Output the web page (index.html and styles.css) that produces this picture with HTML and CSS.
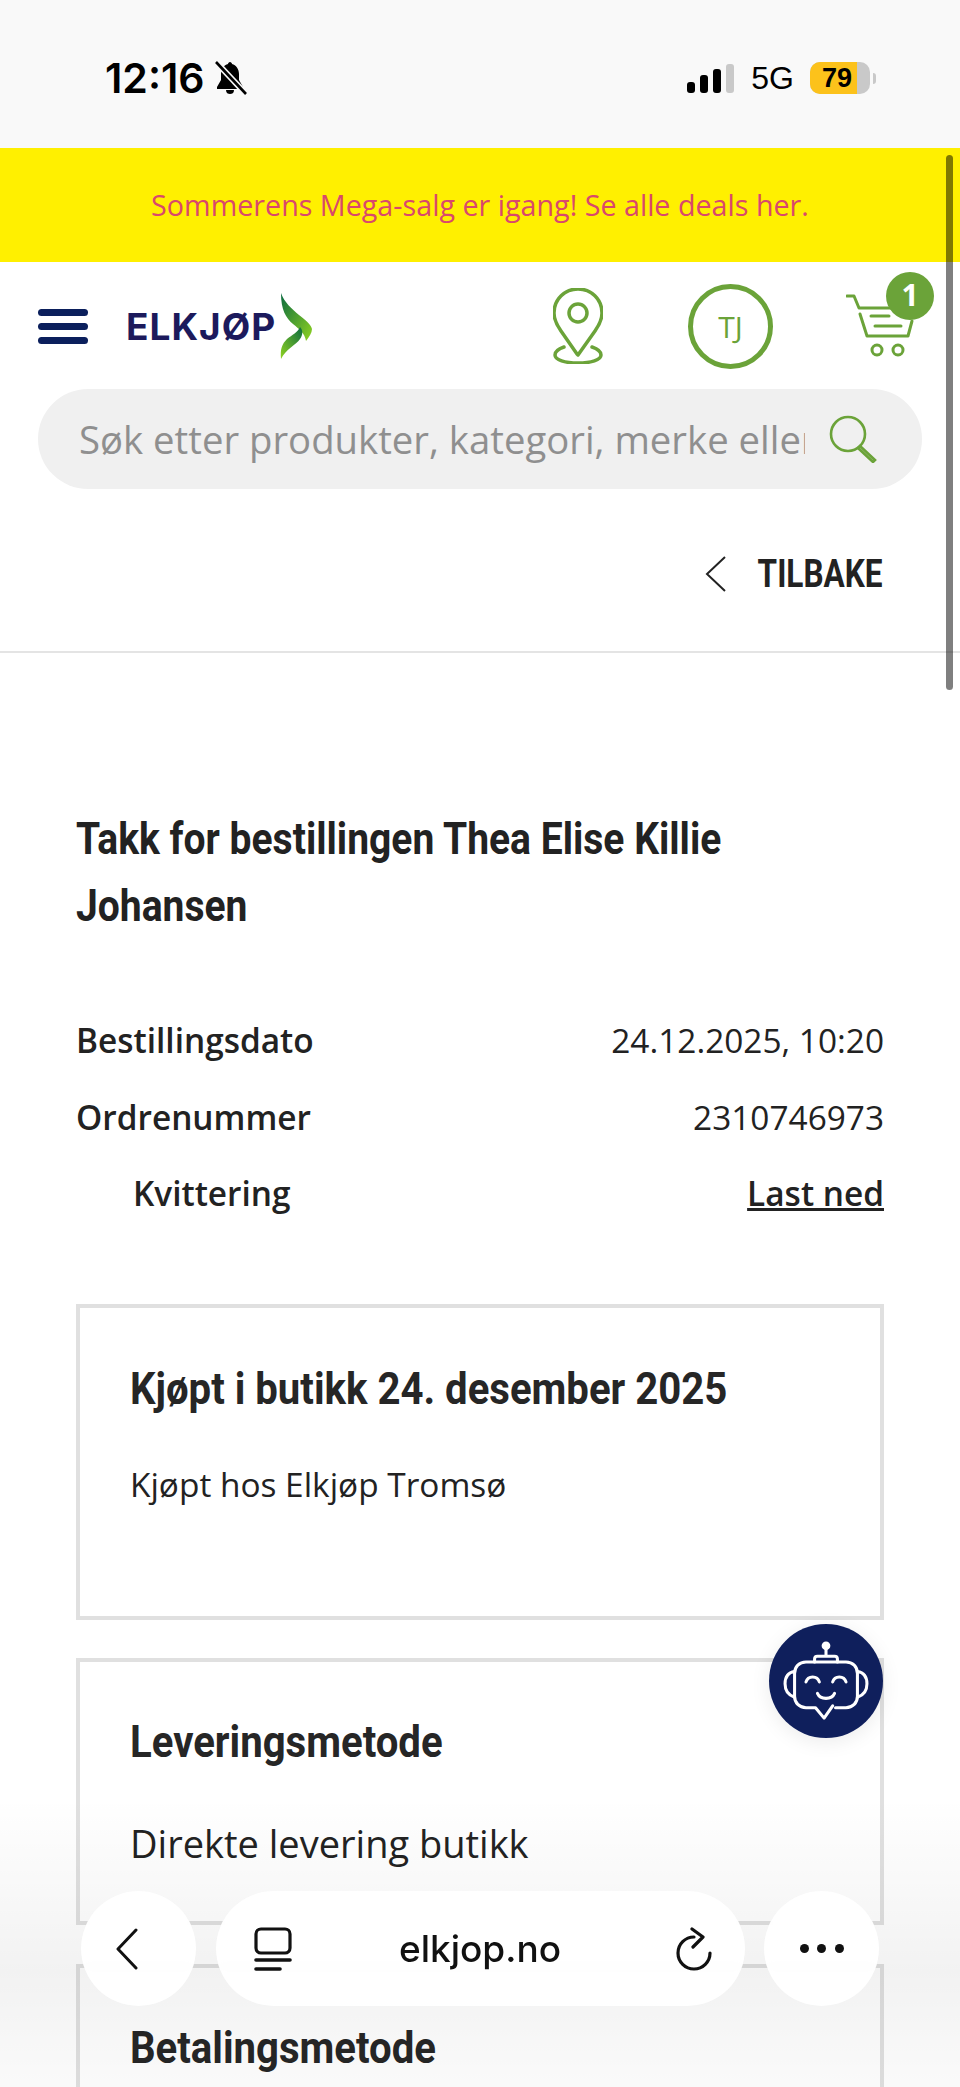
FILE: index.html
```html
<!DOCTYPE html>
<html lang="en">
<head>
    <title>Elkjop - Bestilling</title>
    <link rel="stylesheet" href="styles.css">
</head>
<body>
<div class="page">
    <div class="status-bar">
        <div class="status-left">
            <span class="clock">12:16</span>
            <svg class="bell" viewBox="0 0 32 34">
                <path d="M15 1c-1 0-2 1-2 2-4 1-7 5-7 10v6l-4 7v2h26v-2l-4-7v-6c0-5-3-9-7-10 0-1-1-2-2-2z" fill="#000"/>
                <path d="M11 29h8c0 3-2 4-4 4s-4-1-4-4z" fill="#000"/>
                <path d="M1 1l30 32" stroke="#f9f9f9" stroke-width="6"/>
                <path d="M1 1l30 32" stroke="#000" stroke-width="2.6"/>
            </svg>
        </div>
        <div class="status-right">
            <div class="signal">
                <span class="sig sig1"></span>
                <span class="sig sig2"></span>
                <span class="sig sig3"></span>
                <span class="sig sig4"></span>
            </div>
            <span class="net">5G</span>
            <div class="battery"><span class="battery-level">79</span></div>
            <span class="battery-tip"></span>
        </div>
    </div>

    <div class="promo">Sommerens Mega-salg er igang! Se alle deals her.</div>

    <header class="header">
        <div class="header-top">
            <div class="burger"><span></span><span></span><span></span></div>
            <div class="logo">
                <span class="logo-text">ELKJØP</span>
                <svg class="logo-mark" viewBox="0 0 32 66">
                    <defs>
                        <linearGradient id="leafA" x1="0" y1="0" x2="1" y2="1">
                            <stop offset="0" stop-color="#0b6b3f"/>
                            <stop offset="1" stop-color="#8fd321"/>
                        </linearGradient>
                        <linearGradient id="leafB" x1="0" y1="1" x2="1" y2="0">
                            <stop offset="0" stop-color="#8fd321"/>
                            <stop offset="1" stop-color="#0b6b3f"/>
                        </linearGradient>
                    </defs>
                    <path d="M1 0c3 9 11 16 18 22 6 5 12 9 13 14 0 4-3 8-6 12-1-8-7-12-13-17C6 25 1 17 1 0z" fill="url(#leafA)"/>
                    <path d="M20 34c3 3 3 8 0 12-4 6-14 10-19 20-1-10 1-15 6-20 5-4 11-7 13-12z" fill="url(#leafB)"/>
                </svg>
            </div>
            <div class="header-icons">
                <svg class="pin" viewBox="0 0 50 76" fill="none" stroke="#6ba339" stroke-width="3.5" stroke-linecap="round">
                    <path d="M24 66L8 43C3 36 1 31 1 25 1 11 12 1 25 1s24 10 24 24c0 6-2 11-7 18L25 67"/>
                    <circle cx="25" cy="25" r="9"/>
                    <path d="M11 59C5 61 2 64 2 67c0 5 10 8 23 8s23-3 23-8c0-3-3-6-9-8"/>
                </svg>
                <div class="avatar">TJ</div>
                <div class="cart">
                    <svg class="cart-icon" viewBox="0 0 70 64" fill="none" stroke="#6ba339" stroke-width="3" stroke-linecap="round" stroke-linejoin="round">
                        <path d="M1 2h7l5 12h40"/>
                        <path d="M14 20l7 22h41l4-15"/>
                        <path d="M25 22h18M29 32h26"/>
                        <circle cx="31" cy="56" r="5"/>
                        <circle cx="52" cy="56" r="5"/>
                    </svg>
                    <span class="cart-badge">1</span>
                </div>
            </div>
        </div>
        <div class="search">
            <div class="search-text">Søk etter produkter, kategori, merke eller</div>
            <svg class="search-icon" viewBox="0 0 48 48" fill="none" stroke="#6ba339" stroke-width="2.6" stroke-linecap="round">
                <circle cx="19" cy="19" r="17"/>
                <path d="M31 31l15 14-2 2-15-14"/>
            </svg>
        </div>
    </header>

    <div class="back-row">
        <svg class="back-chevron" viewBox="0 0 22 38" fill="none" stroke="#222" stroke-width="2">
            <path d="M20 2L2 19l18 17"/>
        </svg>
        <span class="back-label">TILBAKE</span>
    </div>

    <main class="content">
        <h1 class="title">Takk for bestillingen Thea Elise Killie Johansen</h1>

        <div class="info-row">
            <span class="info-label">Bestillingsdato</span>
            <span class="info-value">24.12.2025, 10:20</span>
        </div>
        <div class="info-row">
            <span class="info-label">Ordrenummer</span>
            <span class="info-value">2310746973</span>
        </div>
        <div class="info-row">
            <span class="info-label receipt">Kvittering</span>
            <a class="info-link" href="#">Last ned</a>
        </div>

        <section class="card card-shop">
            <h2 class="card-title">Kjøpt i butikk 24. desember 2025</h2>
            <p class="card-text">Kjøpt hos Elkjøp Tromsø</p>
        </section>
        <section class="card card-delivery">
            <h2 class="card-title">Leveringsmetode</h2>
            <p class="card-text large">Direkte levering butikk</p>
        </section>
        <section class="card card-payment">
            <h2 class="card-title">Betalingsmetode</h2>
        </section>
    </main>

    <div class="scrollbar"></div>

    <div class="chat-button">
        <svg viewBox="0 0 90 84" fill="none" stroke="#fff" stroke-width="3.2" stroke-linecap="round" stroke-linejoin="round">
            <circle cx="45" cy="5" r="3" fill="#fff"/>
            <path d="M45 8v8M33 22v-3c0-2 1-3 3-3h18c2 0 3 1 3 3v3"/>
            <path d="M55 70h11c7 0 12-5 12-12V34c0-7-5-12-12-12H24c-7 0-12 5-12 12v24c0 7 5 12 12 12h10l9 11 9-13"/>
            <path d="M12 32C5 33 2 38 2 45s3 12 10 14M78 32c7 1 10 6 10 13s-3 12-10 14"/>
            <path d="M24 43c2-7 12-7 14 0M52 43c2-7 12-7 14 0M36 55c3 7 15 7 18 0"/>
        </svg>
    </div>

    <div class="browser-fade"></div>
    <div class="browser-bar">
        <div class="round-btn">
            <svg class="bar-back" viewBox="0 0 24 42" fill="none" stroke="#111" stroke-width="3" stroke-linecap="round" stroke-linejoin="round">
                <path d="M21 2L3 21l18 19"/>
            </svg>
        </div>
        <div class="url-pill">
            <svg class="reader" viewBox="0 0 38 44" fill="none" stroke="#111" stroke-width="3.2" stroke-linecap="round">
                <rect x="2" y="2" width="34" height="24" rx="5"/>
                <path d="M2 33h34" stroke-width="3.6"/>
                <path d="M2 42h24" stroke-width="3.6"/>
            </svg>
            <span class="url">elkjop.no</span>
            <svg class="reload" viewBox="0 0 38 44" fill="none" stroke="#111" stroke-width="3.2" stroke-linecap="round" stroke-linejoin="round">
                <path d="M18 10A16 16 0 1 0 34 26"/>
                <path d="M16 2l11 8-10 10"/>
            </svg>
        </div>
        <div class="round-btn">
            <div class="dots"><span></span><span></span><span></span></div>
        </div>
    </div>
</div>
</body>
</html>
```

FILE: styles.css
```css
* {
    box-sizing: border-box;
}
html, body {
    margin: 0;
    padding: 0;
}
body {
    font-family: "Open Sans", sans-serif;
    color: #222;
    background-color: #fff;
}
.page {
    position: relative;
    width: 960px;
    height: 2087px;
    overflow: hidden;
    background-color: #fff;
}

/* phone status bar */
.status-bar {
    height: 148px;
    background-color: #f9f9f9;
    display: flex;
    justify-content: space-between;
    align-items: flex-start;
    padding: 55px 84px 0 105px;
    font-family: "Liberation Sans", sans-serif;
    color: #000;
}
.status-left {
    display: flex;
    align-items: center;
    gap: 10px;
}
.clock {
    font-family: Inter, sans-serif;
    font-size: 41px;
    line-height: 46px;
    font-weight: 600;
}
.bell {
    width: 32px;
    height: 34px;
}
.status-right {
    display: flex;
    align-items: center;
    height: 46px;
}
.signal {
    display: flex;
    align-items: flex-end;
    gap: 5px;
    height: 29px;
    margin-right: 17px;
}
.sig {
    width: 8px;
    border-radius: 3px;
    background-color: #000;
}
.sig1 { height: 11px; }
.sig2 { height: 18px; }
.sig3 { height: 24px; }
.sig4 { height: 29px; background-color: #c9c9c9; }
.net {
    font-size: 32px;
    margin-right: 16px;
}
.battery {
    width: 60px;
    height: 32px;
    border-radius: 10px;
    background-color: #c9c9c9;
    overflow: hidden;
}
.battery-level {
    display: block;
    width: 47px;
    height: 32px;
    background-color: #fcc21b;
    padding-left: 12px;
    font-size: 27px;
    line-height: 32px;
    font-weight: 700;
}
.battery-tip {
    width: 3px;
    height: 11px;
    margin-left: 3px;
    border-radius: 0 3px 3px 0;
    background-color: #c9c9c9;
}

.promo {
    height: 114px;
    background-color: #fff000;
    color: #d9486c;
    font-size: 28.7px;
    line-height: 114px;
    text-align: center;
}

/* header */
.header {
    padding: 11px 38px 0;
}
.header-top {
    display: flex;
    align-items: center;
    height: 106px;
    margin-bottom: 10px;
}
.burger {
    display: flex;
    flex-direction: column;
    gap: 7px;
    width: 50px;
}
.burger span {
    height: 7px;
    border-radius: 4px;
    background-color: #0b1f5c;
}
.logo {
    display: flex;
    align-items: center;
    margin-left: 38px;
    gap: 4px;
}
.logo-text {
    font-family: Inter, sans-serif;
    font-size: 37px;
    font-weight: 700;
    letter-spacing: 1px;
    color: #1c1a5c;
}
.logo-mark {
    width: 32px;
    height: 66px;
}
.header-icons {
    margin-left: auto;
    display: flex;
    align-items: center;
}
.pin {
    width: 50px;
    height: 76px;
    margin-right: 85px;
}
.avatar {
    width: 85px;
    height: 85px;
    border: 5px solid #6ba339;
    border-radius: 50%;
    color: #6ba339;
    font-size: 30px;
    line-height: 75px;
    text-align: center;
}
.cart {
    position: relative;
    width: 70px;
    height: 64px;
    margin-left: 73px;
    margin-right: 6px;
}
.cart-icon {
    width: 70px;
    height: 64px;
}
.cart-badge {
    position: absolute;
    top: -22px;
    left: 40px;
    width: 48px;
    height: 48px;
    border-radius: 50%;
    background-color: #6ba339;
    color: #fff;
    font-size: 30px;
    font-weight: 700;
    line-height: 46px;
    text-align: center;
}
.search {
    display: flex;
    align-items: center;
    height: 100px;
    padding: 0 45px 0 41px;
    border-radius: 50px;
    background-color: #f0f0f0;
}
.search-text {
    width: 726px;
    overflow: hidden;
    white-space: nowrap;
    font-size: 38.3px;
    color: #8f8f8f;
}
.search-icon {
    width: 48px;
    height: 48px;
    margin-left: 24px;
}

/* back link */
.back-row {
    display: flex;
    justify-content: flex-end;
    align-items: center;
    height: 164px;
    padding: 8px 77px 0 0;
    border-bottom: 2px solid #e4e4e4;
    gap: 5px;
}
.back-chevron {
    width: 22px;
    height: 38px;
}
.back-label {
    font-family: Roboto, sans-serif;
    font-size: 38px;
    font-weight: 700;
    transform: scaleX(0.83);
    transform-origin: right center;
}

/* order summary */
.content {
    padding: 153px 76px 0;
}
.title {
    width: 915px;
    margin: 0 0 62px;
    font-family: Roboto, sans-serif;
    font-size: 44px;
    line-height: 67px;
    font-weight: 700;
    color: #222;
    transform: scaleX(0.887);
    transform-origin: left center;
}
.info-row {
    display: flex;
    justify-content: space-between;
    align-items: center;
    height: 76.5px;
    font-size: 33.4px;
}
.info-label {
    font-weight: 600;
}
.receipt {
    margin-left: 57px;
}
.info-link {
    color: #222;
    font-weight: 600;
    text-decoration: underline;
}
.card {
    border: 4px solid #e0e0e0;
    padding: 0 50px;
}
.card-shop {
    height: 316px;
    margin-top: 72px;
}
.card-delivery {
    height: 267px;
    margin-top: 38px;
}
.card-payment {
    height: 200px;
    margin-top: 39px;
}
.card-title {
    margin: 0;
    font-family: Roboto, sans-serif;
    font-size: 44px;
    font-weight: 700;
    line-height: 60px;
    color: #262626;
    white-space: nowrap;
    transform: scaleX(0.912);
    transform-origin: left center;
}
.card-shop .card-title {
    margin-top: 51px;
}
.card-delivery .card-title {
    margin-top: 50px;
}
.card-payment .card-title {
    margin-top: 50px;
}
.card-text {
    margin: 42px 0 0;
    font-size: 33.4px;
    line-height: 46px;
}
.card-text.large {
    margin-top: 48px;
    font-size: 38px;
}

/* things that float over the page */
.scrollbar {
    position: absolute;
    top: 155px;
    left: 946px;
    width: 7px;
    height: 535px;
    border-radius: 4px;
    background-color: rgba(0, 0, 0, 0.5);
}
.chat-button {
    position: absolute;
    top: 1624px;
    left: 769px;
    width: 114px;
    height: 114px;
    padding: 17px 14px;
    border-radius: 50%;
    background-color: #0f1f5c;
    box-shadow: 0 4px 20px rgba(0, 0, 0, 0.08);
}
.chat-button svg {
    display: block;
    width: 86px;
    height: 80px;
}
.browser-fade {
    position: absolute;
    left: 0;
    right: 0;
    bottom: 0;
    height: 290px;
    background: linear-gradient(to bottom, rgba(0, 0, 0, 0), rgba(0, 0, 0, 0.05) 60%, rgba(0, 0, 0, 0.02));
}
.browser-bar {
    position: absolute;
    top: 1891px;
    left: 81px;
    width: 798px;
    height: 115px;
    display: flex;
    justify-content: space-between;
}
.round-btn,
.url-pill {
    height: 115px;
    background-color: rgba(255, 255, 255, 0.95);
    backdrop-filter: blur(6px);
}
.round-btn {
    width: 115px;
    border-radius: 50%;
    display: flex;
    align-items: center;
    justify-content: center;
}
.bar-back {
    width: 24px;
    height: 42px;
    margin-right: 24px;
}
.url-pill {
    width: 529px;
    border-radius: 58px;
    display: flex;
    align-items: center;
    justify-content: space-between;
    padding: 0 31px 0 38px;
}
.reader {
    width: 38px;
    height: 44px;
}
.reload {
    width: 38px;
    height: 44px;
}
.url {
    margin-right: 7px;
    font-family: Inter, sans-serif;
    font-size: 37px;
    font-weight: 500;
    color: #111;
}
.dots {
    display: flex;
    gap: 8.5px;
}
.dots span {
    width: 9px;
    height: 9px;
    border-radius: 50%;
    background-color: #111;
}
```
